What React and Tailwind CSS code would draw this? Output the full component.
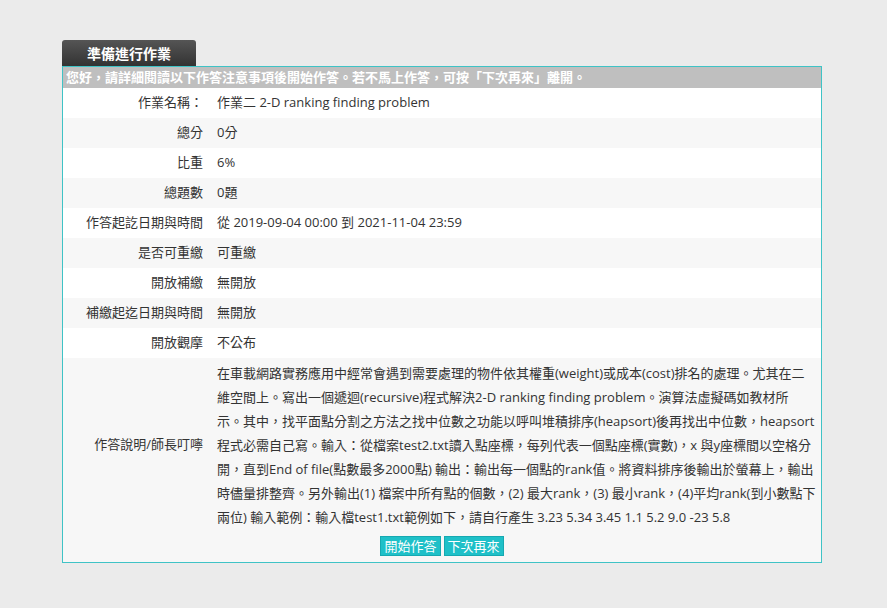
import React from "react";

const rows = [
  { label: "作業名稱：", value: "作業二 2-D ranking finding problem" },
  { label: "總分", value: "0分" },
  { label: "比重", value: "6%" },
  { label: "總題數", value: "0題" },
  { label: "作答起訖日期與時間", value: "從 2019-09-04 00:00 到 2021-11-04 23:59" },
  { label: "是否可重繳", value: "可重繳" },
  { label: "開放補繳", value: "無開放" },
  { label: "補繳起迄日期與時間", value: "無開放" },
  { label: "開放觀摩", value: "不公布" },
];

// lines broken where the original page wraps them
const descLines = [
  "在車載網路實務應用中經常會遇到需要處理的物件依其權重(weight)或成本(cost)排名的處理。尤其在二",
  "維空間上。寫出一個遞迴(recursive)程式解決2-D ranking finding problem。演算法虛擬碼如教材所",
  "示。其中，找平面點分割之方法之找中位數之功能以呼叫堆積排序(heapsort)後再找出中位數，heapsort",
  "程式必需自己寫。輸入：從檔案test2.txt讀入點座標，每列代表一個點座標(實數)，x 與y座標間以空格分",
  "開，直到End of file(點數最多2000點) 輸出：輸出每一個點的rank值。將資料排序後輸出於螢幕上，輸出",
  "時儘量排整齊。另外輸出(1) 檔案中所有點的個數，(2) 最大rank，(3) 最小rank，(4)平均rank(到小數點下",
  "兩位) 輸入範例：輸入檔test1.txt範例如下，請自行產生 3.23 5.34 3.45 1.1 5.2 9.0 -23 5.8",
];

export default function App() {
  return (
    <div
      className="min-h-[608px] w-full bg-[#ebebeb] pt-[40px] text-[13px] text-[#333]"
      style={{ fontFamily: '"Open Sans", "Noto Sans CJK TC", sans-serif' }}
    >
      <div className="ml-[62px] w-[760px]">
        <div className="flex h-[26px] w-[134px] items-center justify-center rounded-t-[3px] bg-gradient-to-b from-[#555] to-[#333] text-[14px] font-bold text-white">
          準備進行作業
        </div>
        <div className="border border-[#3fc3c6]">
          <div className="flex h-[21px] items-center bg-[#bfbfbf] pl-[3px] text-[13px] font-bold text-white">
            您好，請詳細閱讀以下作答注意事項後開始作答。若不馬上作答，可按「下次再來」離開。
          </div>
          {rows.map((r, i) => (
            <div
              key={r.label}
              className={
                "grid h-[30px] grid-cols-[144px_1fr] items-center " +
                (i % 2 === 0 ? "bg-white" : "bg-[#f7f7f7]")
              }
            >
              <div className="pr-[4px] text-right">{r.label}</div>
              <div className="pl-[10px]">{r.value}</div>
            </div>
          ))}
          <div className="bg-[#f7f7f7]">
            <div className="grid grid-cols-[144px_1fr] items-center pt-[3px]">
              <div className="pr-[4px] text-right">作答說明/師長叮嚀</div>
              <div className="pl-[10px] leading-[24px]">
                {descLines.map((l) => (
                  <div key={l} className="whitespace-nowrap">
                    {l}
                  </div>
                ))}
              </div>
            </div>
            <div className="flex justify-center gap-[3px] pb-[6px] pt-[7px]">
              <button className="h-[20px] border border-[#16a9b1] bg-[#1fc0c8] px-[3px] text-[13px] leading-[18px] text-white">
                開始作答
              </button>
              <button className="h-[20px] border border-[#16a9b1] bg-[#1fc0c8] px-[3px] text-[13px] leading-[18px] text-white">
                下次再來
              </button>
            </div>
          </div>
        </div>
      </div>
    </div>
  );
}
